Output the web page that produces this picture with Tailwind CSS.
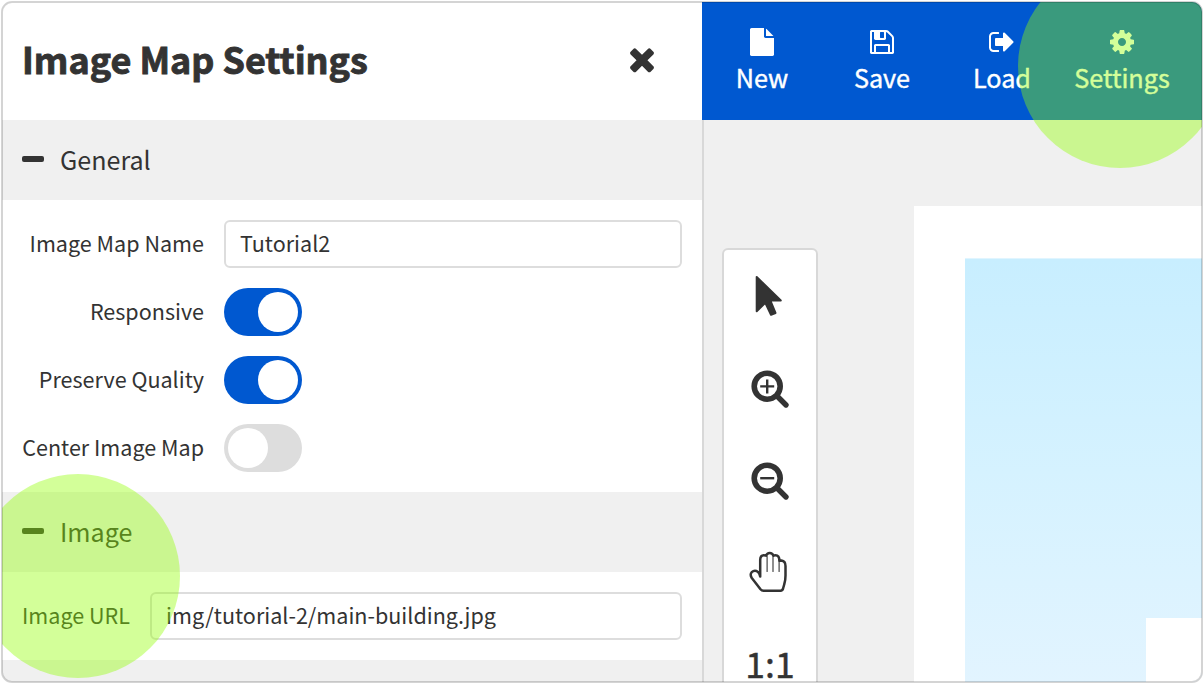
<!DOCTYPE html>
<html lang="en">
<head>
<meta charset="utf-8">
<title>Image Map Settings</title>
<script src="https://cdn.jsdelivr.net/npm/@tailwindcss/browser@4"></script>
</head>
<body class="bg-white font-['Noto_Sans_CJK_SC','Noto_Sans',sans-serif] text-[#333]">
<div class="relative h-[684px] w-[1204px] overflow-hidden p-0.5">
  <div class="relative flex h-[680px] w-[1200px] overflow-hidden rounded-[10px] bg-[#f0f0f0]">

    <aside class="w-[700px] shrink-0 bg-white">
      <header class="flex h-[118px] items-center justify-between pr-[42px] pb-1 pl-5">
        <h1 class="pb-0.5 text-[35.9px] leading-[40px] font-bold whitespace-nowrap [-webkit-text-stroke:0.9px_#333]">Image Map Settings</h1>
        <svg class="size-9" viewBox="0 0 1792 1792" fill="currentColor"><path d="M1490 1322q0 40-28 68l-136 136q-28 28-68 28t-68-28l-294-294-294 294q-28 28-68 28t-68-28l-136-136q-28-28-28-68t28-68l294-294-294-294q-28-28-28-68t28-68l136-136q28-28 68-28t68 28l294 294 294-294q28-28 68-28t68 28l136 136q28 28 28 68t-28 68l-294 294 294 294q28 28 28 68z"/></svg>
      </header>

      <div class="flex h-20 items-center gap-4 bg-[#f0f0f0] pl-5 text-[25.1px] leading-[40px]">
        <span class="mb-0.5 h-1.5 w-[22px] rounded-[2px] bg-[#333]"></span><span class="pb-0.5">General</span>
      </div>
      <div class="flex h-[292px] flex-col gap-5 p-5 text-[21.56px] leading-[46px] whitespace-nowrap">
        <div class="flex h-12 gap-5"><span class="w-[182px] text-right">Image Map Name</span><div class="flex-1 rounded-md border-2 border-[#ddd] px-3.5 leading-[42px]">Tutorial2</div></div>
        <div class="flex h-12 gap-5"><span class="w-[182px] text-right">Responsive</span><div class="flex w-[78px] justify-end rounded-full bg-[#0058d0] p-1"><span class="size-10 rounded-full bg-white"></span></div></div>
        <div class="flex h-12 gap-5"><span class="w-[182px] text-right">Preserve Quality</span><div class="flex w-[78px] justify-end rounded-full bg-[#0058d0] p-1"><span class="size-10 rounded-full bg-white"></span></div></div>
        <div class="flex h-12 gap-5"><span class="w-[182px] text-right">Center Image Map</span><div class="flex w-[78px] rounded-full bg-[#ddd] p-1"><span class="size-10 rounded-full bg-white"></span></div></div>
      </div>

      <div class="flex h-20 items-center gap-4 bg-[#f0f0f0] pl-5 text-[25.1px] leading-[40px]">
        <span class="mb-0.5 h-1.5 w-[22px] rounded-[2px] bg-[#333]"></span><span class="pb-0.5">Image</span>
      </div>
      <div class="flex h-[88px] gap-5 p-5 text-[21.56px] leading-[46px] whitespace-nowrap">
        <span class="w-[108px]">Image URL</span><div class="flex-1 rounded-md border-2 border-[#ddd] px-3.5 leading-[42px]">img/tutorial-2/main-building.jpg</div>
      </div>
      <div class="h-10 bg-[#f0f0f0]"></div>
    </aside>

    <main class="flex w-[500px] flex-col">
      <nav class="flex h-[118px] shrink-0 bg-[#0058d0] pt-[26px] text-[25.2px] leading-[40px] text-white [-webkit-text-stroke:0.4px_#fff]">
        <div class="flex w-[120px] flex-col items-center gap-px">
          <svg class="size-7" viewBox="0 0 1792 1792" fill="currentColor"><path d="M1152 512v-472q22 14 36 28l408 408q14 14 28 36h-472zm-128 32q0 40 28 68t68 28h544v1056q0 40-28 68t-68 28h-1344q-40 0-68-28t-28-68v-1600q0-40 28-68t68-28h800v544z"/></svg><span>New</span>
        </div>
        <div class="flex w-[120px] flex-col items-center gap-px">
          <svg class="size-7" viewBox="0 0 1792 1792" fill="currentColor"><path d="M512 1536h768v-384h-768v384zm896 0h128v-896q0-14-10-38.5t-20-34.5l-281-281q-10-10-34-20t-39-10v416q0 40-28 68t-68 28h-576q-40 0-68-28t-28-68v-416h-128v1280h128v-416q0-40 28-68t68-28h832q40 0 68 28t28 68v416zm-384-928v-320q0-13-9.5-22.5t-22.5-9.5h-192q-13 0-22.5 9.5t-9.5 22.5v320q0 13 9.5 22.5t22.5 9.5h192q13 0 22.5-9.5t9.5-22.5zm640 32v928q0 40-28 68t-68 28h-1344q-40 0-68-28t-28-68v-1344q0-40 28-68t68-28h928q40 0 88 20t76 48l280 280q28 28 48 76t20 88z"/></svg><span>Save</span>
        </div>
        <div class="flex w-[120px] flex-col items-center gap-px">
          <svg class="size-7" viewBox="0 0 1792 1792" fill="currentColor"><path d="M704 1440q0 4 1 20t.5 26.5-3 23.5-10 19.5-20.5 6.5h-320q-119 0-203.5-84.5t-84.5-203.5v-704q0-119 84.5-203.5t203.5-84.5h320q13 0 22.5 9.5t9.5 22.5q0 4 1 20t.5 26.5-3 23.5-10 19.5-20.5 6.5h-320q-66 0-113 47t-47 113v704q0 66 47 113t113 47h312l11.5 1 11.5 3 8 5.5 7 9 2 13.5zm928-544q0 26-19 45l-544 544q-19 19-45 19t-45-19-19-45v-288h-448q-26 0-45-19t-19-45v-384q0-26 19-45t45-19h448v-288q0-26 19-45t45-19 45 19l544 544q19 19 19 45z"/></svg><span>Load</span>
        </div>
        <div class="flex w-[120px] flex-col items-center gap-px">
          <svg class="size-7" viewBox="0 0 1792 1792" fill="currentColor"><path d="M1152 896q0-106-75-181t-181-75-181 75-75 181 75 181 181 75 181-75 75-181zm512-109v222q0 12-8 23t-20 13l-185 28q-19 54-39 91 35 50 107 138 10 12 10 25t-9 23q-27 37-99 108t-94 71q-12 0-26-9l-138-108q-44 23-91 38-16 136-29 186-7 28-36 28h-222q-14 0-24.5-8.5t-11.5-21.5l-28-184q-49-16-90-37l-141 107q-10 9-25 9-14 0-25-11-126-114-165-168-7-10-7-23 0-12 8-23 15-21 51-66.5t54-70.5q-27-50-41-99l-183-27q-13-2-21-12.5t-8-23.5v-222q0-12 8-23t19-13l186-28q14-46 39-92-40-57-107-138-10-12-10-24 0-10 9-23 26-36 98.5-107.5t94.5-71.5q13 0 26 10l138 107q44-23 91-38 16-136 29-186 7-28 36-28h222q14 0 24.5 8.5t11.5 21.5l28 184q49 16 90 37l142-107q9-9 24-9 13 0 25 10 129 119 165 170 7 8 7 22 0 12-8 23-15 21-51 66.5t-54 70.5q26 50 41 98l183 28q13 2 21 12.5t8 23.5z"/></svg><span>Settings</span>
        </div>
      </nav>

      <section class="flex flex-1 overflow-hidden border-l-2 border-[#d8d8d8]">
        <div class="mt-32 ml-[18px] flex h-[500px] w-24 shrink-0 flex-col items-center rounded-md border-2 border-[#d8d8d8] bg-white pt-0.5">
          <svg class="h-[92px] w-[92px] shrink-0" viewBox="0 0 92 92" fill="#333" stroke="#333" stroke-linejoin="round"><path stroke-width="2" d="M32.7 25V59.2L41.3 50.8L47 62.8L51.5 61L46.3 48.5H56.8Z"/></svg>
          <svg class="h-[92px] w-[92px] shrink-0" viewBox="0 0 92 92" fill="none" stroke="#333"><circle cx="43.2" cy="42.2" r="13" stroke-width="5.6"/><path stroke-width="5.4" stroke-linecap="round" d="M53.5 52.5L62 61"/><path stroke-width="2.4" d="M36.2 42.4H50.2M43.2 35.4V49.4"/></svg>
          <svg class="h-[92px] w-[92px] shrink-0" viewBox="0 0 92 92" fill="none" stroke="#333"><circle cx="43.2" cy="42.2" r="13" stroke-width="5.6"/><path stroke-width="5.4" stroke-linecap="round" d="M53.5 52.5L62 61"/><path stroke-width="2.4" d="M36.2 42.2H50.2"/></svg>
          <svg class="h-[92px] w-[92px] shrink-0" viewBox="0 0 92 92" fill="none" stroke="#333" stroke-linecap="round" stroke-linejoin="round"><g transform="translate(0 8.5)"><path stroke-width="2.5" d="M36.2 40V23.5Q36.2 18.7 39.8 18.7Q41.3 18.7 42.2 19.2Q43 16.4 45.7 16.4Q48.5 16.4 49.4 19.2Q50.2 18.7 51.5 18.7Q55.4 18.7 55.4 24.2Q56.3 23.9 57.5 23.9Q61.5 24.5 61.5 29.5V39Q61.5 44 60.2 48L59.2 51.5Q58.7 54.2 56.5 54.2H39.5Q37.7 54.2 36.5 52.8L27.8 41.5Q25.7 38 27.7 35.7Q30.7 32.9 34 35.4Q35.7 37 36.2 40"/><path stroke-width="1.1" d="M43.1 20V35M49 20V35M55.1 24V35"/></g></svg>
          <div class="text-[35.6px] leading-[86px] [-webkit-text-stroke:0.4px_#333]">1:1</div>
        </div>
        <div class="mt-[86px] ml-24 w-[300px] shrink-0 bg-white pt-[52px] pl-[51px]">
          <div class="flex h-[424px] flex-col items-end justify-end border-t border-t-[#e0f5ff] bg-linear-to-b from-[#c8eeff] via-[#d5f2ff] to-[#e2f4ff] pr-[12px]">
            <div class="h-16 w-14 bg-white"></div>
          </div>
        </div>
      </section>
    </main>

    <div class="absolute top-[472px] -left-[26px] size-[204px] rounded-full bg-[#91ff00]/40"></div>
    <div class="absolute -top-[38px] left-[1016px] size-[204px] rounded-full bg-[#91ff00]/40"></div>
  </div>
  <div class="absolute top-px left-px h-[682px] w-[1202px] rounded-[11px] border-2 border-black/17"></div>
</div>
</body>
</html>
